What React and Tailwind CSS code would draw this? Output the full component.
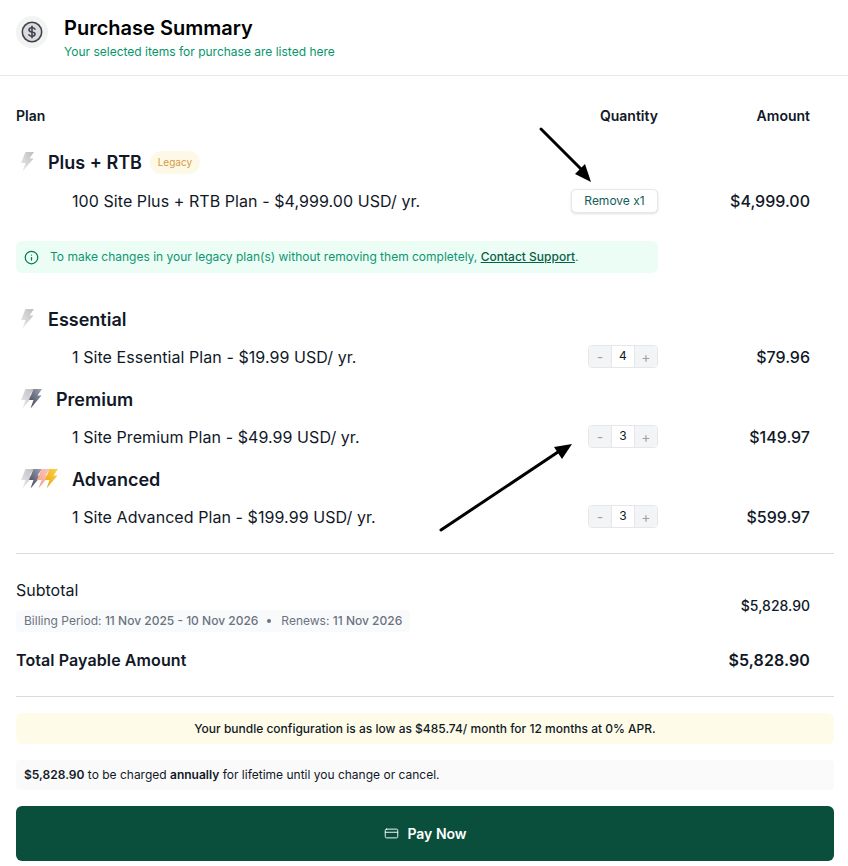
import React from 'react';
import { Info, CreditCard } from 'lucide-react';

const boltPath = 'M4.500 0 L13 0 L8.500 6.500 L12.500 6.500 L1.500 19.500 L4.500 11 L0 11 Z';

const Bolt = ({ id, from, to, x = 0 }) => (
    <g transform={`translate(${x} 0)`}>
        <defs>
            <linearGradient id={id} x1="1" y1="0" x2="0" y2="1">
                <stop offset="0" stopColor={from} />
                <stop offset="1" stopColor={to} />
            </linearGradient>
        </defs>
        <path d={boltPath} fill={`url(#${id})`} />
    </g>
);

const silver = { from: '#bdbdc2', to: '#ececec' };
const slate = { from: '#a0a5b5', to: '#3a3f50' };
const coral = { from: '#fbc8ba', to: '#f79d8b' };
const gold = { from: '#fcd34d', to: '#e8a40c' };

const PlanIcon = ({ id, bolts }) => {
    const width = 13 + (bolts.length - 1) * 8;
    return (
        <svg width={width} height="20" viewBox={`0 0 ${width} 20`}>
            {bolts.map((b, i) => (
                <Bolt key={i} id={`${id}-${i}`} from={b.from} to={b.to} x={i * 8} />
            ))}
        </svg>
    );
};

const Stepper = ({ value }) => (
    <div className="mb-[2px] flex h-[23px] w-[70px] overflow-hidden rounded-[4px] border border-[#e5e7eb] text-[14px]">
        <span className="flex w-[22px] items-center justify-center bg-[#f3f4f6] text-[#a1a1aa]">-</span>
        <span className="flex flex-1 items-center justify-center border-x border-[#e5e7eb] bg-white text-[12px] text-[#111827]">{value}</span>
        <span className="flex w-[22px] items-center justify-center bg-[#f3f4f6] text-[#a1a1aa]">+</span>
    </div>
);

const PlanRow = ({ label, amount, children }) => (
    <div className="flex h-[38px] items-center pr-[24px]">
        <div className="flex-1 pl-[56px] text-[16px] tracking-[0.07px] text-[#111827]">{label}</div>
        <div className="flex w-[70px] justify-end">{children}</div>
        <div className="w-[152px] text-right text-[16px] font-medium text-[#111827]">{amount}</div>
    </div>
);

const PlanHeading = ({ id, name, bolts, gap, children }) => (
    <div className="flex h-[24px] items-center">
        <div className="ml-[5px] flex" style={{ width: gap }}>
            <PlanIcon id={id} bolts={bolts} />
        </div>
        <h3 className="text-[18px] font-semibold text-[#111827]">{name}</h3>
        {children}
    </div>
);

const App = () => {
    return (
        <div className="relative h-[866px] w-[848px] overflow-hidden bg-white font-['Inter',sans-serif]">
            <header className="flex h-[76px] items-start border-b border-[#e5e7eb] pl-[16px] pt-[16px]">
                <div className="flex h-[32px] w-[32px] items-center justify-center rounded-full bg-[#f3f3f3]">
                    <svg width="22" height="22" viewBox="0 0 22 22" fill="none" stroke="#3f4350" strokeWidth="1.6" strokeLinecap="round" strokeLinejoin="round">
                        <circle cx="11" cy="11" r="9.700" fill="#dcdcde" />
                        <path d="M14 8.200c-.5-.9-1.500-1.400-3-1.400-1.700 0-3 .8-3 2.100s1.300 1.800 3 2.100 3 .8 3 2.100-1.300 2.100-3 2.100c-1.500 0-2.500-.5-3-1.400" />
                        <path d="M11 5.200v11.600" />
                    </svg>
                </div>
                <div className="ml-[16px]">
                    <h1 className="text-[20px] font-semibold leading-[24px] text-black">Purchase Summary</h1>
                    <p className="mt-[2px] text-[12px] leading-[20px] text-[#059669]">Your selected items for purchase are listed here</p>
                </div>
            </header>

            <main className="pl-[16px] pr-[14px]">
                <div className="mt-[29px] flex h-[20px] items-center pr-[24px] text-[14px] font-semibold text-[#111827]">
                    <div className="flex-1">Plan</div>
                    <div>Quantity</div>
                    <div className="w-[152px] text-right">Amount</div>
                </div>

                <div className="mt-[25px]">
                    <PlanHeading id="plus" name="Plus + RTB" bolts={[silver]} gap={27}>
                        <span className="ml-[8px] flex h-[23px] w-[50px] items-center justify-center rounded-full bg-[#fef9e7] text-[10px] text-[#d49a45]">Legacy</span>
                    </PlanHeading>
                </div>
                <div className="mt-[8px]">
                    <PlanRow label="100 Site Plus + RTB Plan - $4,999.00 USD/ yr." amount="$4,999.00">
                        <button className="h-[24px] w-[87px] shrink-0 rounded-[5px] border border-[#e5e7eb] bg-white text-[12px] text-[#115e59] shadow-sm">Remove x1</button>
                    </PlanRow>
                </div>

                <div className="mr-[176px] mt-[21px] flex h-[32px] items-center rounded-[6px] bg-[#ecfdf5] pl-[8px] text-[12px] text-[#0f9573]">
                    <Info size={15} className="mr-[11px] text-[#047857]" />
                    <span>
                        To make changes in your legacy plan(s) without removing them completely, <a className="font-medium text-[#065f46] underline">Contact Support</a>.
                    </span>
                </div>

                <div className="mt-[34px]">
                    <PlanHeading id="essential" name="Essential" bolts={[silver]} gap={27} />
                </div>
                <div className="mt-[7px]">
                    <PlanRow label="1 Site Essential Plan - $19.99 USD/ yr." amount="$79.96">
                        <Stepper value={4} />
                    </PlanRow>
                </div>
                <div className="mt-[11px]">
                    <PlanHeading id="premium" name="Premium" bolts={[silver, slate]} gap={35} />
                </div>
                <div className="mt-[7px]">
                    <PlanRow label="1 Site Premium Plan - $49.99 USD/ yr." amount="$149.97">
                        <Stepper value={3} />
                    </PlanRow>
                </div>
                <div className="mt-[11px]">
                    <PlanHeading id="advanced" name="Advanced" bolts={[silver, slate, coral, gold]} gap={51} />
                </div>
                <div className="mt-[7px]">
                    <PlanRow label="1 Site Advanced Plan - $199.99 USD/ yr." amount="$599.97">
                        <Stepper value={3} />
                    </PlanRow>
                </div>

                <div className="mt-[17px] border-t border-[#d9dbe0]" />

                <div className="flex items-center pr-[24px]">
                    <div className="flex-1 pt-[25px]">
                        <div className="text-[16px] leading-[22px] text-[#111827]">Subtotal</div>
                        <div className="mt-[9px] inline-flex h-[22px] items-center rounded-[4px] bg-[#f9fafb] px-[8px] text-[12px] text-[#6b7280]">
                            <span>Billing Period: <span className="font-medium">11 Nov 2025 - 10 Nov 2026</span></span>
                            <span className="ml-[9px] mr-[10px] h-[4px] w-[4px] rounded-full bg-[#6b7280]" />
                            <span>Renews: <span className="font-medium">11 Nov 2026</span></span>
                        </div>
                    </div>
                    <div className="pt-[25px] text-[14px] font-medium text-[#111827]">$5,828.90</div>
                </div>

                <div className="mt-[16px] flex h-[24px] items-center justify-between pr-[24px] text-[16px] font-semibold tracking-[0.1px] text-[#111827]">
                    <span>Total Payable Amount</span>
                    <span>$5,828.90</span>
                </div>

                <div className="mt-[24px] border-t border-[#d9dbe0]" />

                <div className="mt-[16px] flex h-[31px] items-center justify-center rounded-[6px] bg-[#fefce8] text-[12px] font-medium text-[#111827]">
                    Your bundle configuration is as low as $485.74/ month for 12 months at 0% APR.
                </div>
                <div className="mt-[16px] flex h-[30px] items-center rounded-[4px] bg-[#fafafa] px-[8px] text-[12px] text-[#111827]">
                    <span><span className="font-semibold">$5,828.90</span> to be charged <span className="font-semibold">annually</span> for lifetime until you change or cancel.</span>
                </div>
                <button className="mt-[16px] flex h-[55px] w-full items-center justify-center gap-[8px] rounded-[6px] bg-[#094f3b] pl-[1px] text-[14px] font-semibold text-white">
                    <CreditCard size={15} strokeWidth={1.5} />
                    Pay Now
                </button>
            </main>

            {/* annotation arrows drawn on top of the screenshot */}
            <svg className="pointer-events-none absolute inset-0" width="848" height="866">
                <path d="M541 129 L582 170" stroke="#000" strokeWidth="3" strokeLinecap="round" />
                <path d="M591 182 L575 174 L585 164 Z" fill="#000" />
                <path d="M441 530 L558 452" stroke="#000" strokeWidth="3" strokeLinecap="round" />
                <path d="M572 444 L562 459 L554 447 Z" fill="#000" />
            </svg>
        </div>
    );
};

export default App;
